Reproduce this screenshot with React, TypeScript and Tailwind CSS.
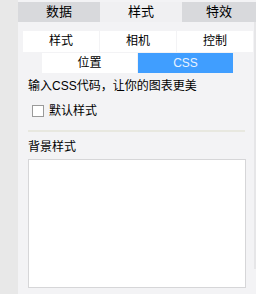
import React, { useState } from 'react';

const font = { fontFamily: '"Liberation Sans", "Noto Sans CJK SC", sans-serif' };

const App: React.FC = () => {
  const [tab, setTab] = useState('样式');
  const [sub, setSub] = useState('CSS');
  const [useDefault, setUseDefault] = useState(false);
  const [css, setCss] = useState('');

  const tabs = [
    { name: '数据', w: 'w-[82px]' },
    { name: '样式', w: 'w-[82px]' },
    { name: '特效', w: 'flex-1' },
  ];

  const subBtn = (name: string, w: string) => (
    <button
      key={name}
      onClick={() => setSub(name)}
      className={`${w} flex items-center justify-center text-[12px] leading-none ${
        sub === name ? 'bg-[#409eff] text-[#e8f2ff]' : 'bg-white text-black'
      }`}
    >
      {name}
    </button>
  );

  return (
    <div className="w-[256px] h-[294px] flex bg-[#f3f3f5] text-black overflow-hidden" style={font}>
      <div className="w-[18px] shrink-0 bg-[#e8e8e8]" />
      <div className="flex-1 flex flex-col">
        <div className="mt-[2px] flex h-[25px]">
          {tabs.map(t => (
            <button
              key={t.name}
              onClick={() => setTab(t.name)}
              className={`${t.w} flex items-center justify-center text-[13px] ${
                tab === t.name ? 'bg-[#f0f0f2]' : 'bg-[#d8d9dc]'
              }`}
            >
              {t.name}
            </button>
          ))}
        </div>

        <div className="flex flex-1">
          <div className="w-[236px] flex flex-col">
            <div className="mt-[9px] ml-[5px] flex gap-px h-[21px]">
              {subBtn('样式', 'w-[76px]')}
              {subBtn('相机', 'w-[76px]')}
              {subBtn('控制', 'w-[76px]')}
            </div>
            <div className="mt-px ml-[24px] flex gap-px h-[20px]">
              {subBtn('位置', 'w-[95px]')}
              {subBtn('CSS', 'w-[95px]')}
            </div>

            <div className="px-[10px]">
              <p className="mt-[5px] text-[12px] leading-[16px]">输入CSS代码，让你的图表更美</p>
              <label className="mt-[9px] ml-[4px] flex items-center gap-[5px] h-[16px] text-[12px] cursor-pointer">
                <span
                  onClick={() => setUseDefault(!useDefault)}
                  className="w-[12px] h-[12px] border border-[#9a9a9a] bg-white flex items-center justify-center text-[9px] leading-none"
                >
                  {useDefault ? '✓' : ''}
                </span>
                默认样式
              </label>
              <div className="mt-[11px] h-[2px] w-[217px] bg-[#e8e8e0]" />
              <p className="mt-[7px] text-[12px] leading-[16px]">背景样式</p>
              <textarea
                value={css}
                onChange={e => setCss(e.target.value)}
                className="mt-[4px] w-[218px] h-[129px] bg-white border border-[#d6d6d8] outline-none resize-none text-[12px] p-1"
              />
            </div>
          </div>
          <div className="flex-1" />
          <div className="w-[2px] h-[247px] bg-[#e6e6e8]" />
        </div>
      </div>
    </div>
  );
};

export default App;
